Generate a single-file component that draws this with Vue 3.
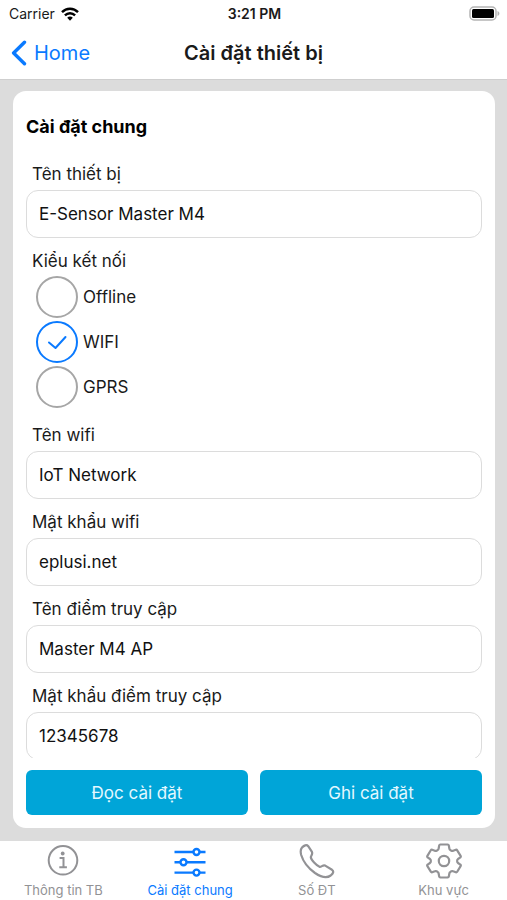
<script setup>
import { ref } from 'vue'

const deviceName = ref('E-Sensor Master M4')
const connection = ref('wifi')
const connections = [
  { value: 'offline', label: 'Offline' },
  { value: 'wifi', label: 'WIFI' },
  { value: 'gprs', label: 'GPRS' },
]
const networkFields = ref([
  { id: 'wifi-name', label: 'Tên wifi', value: 'IoT Network' },
  { id: 'wifi-password', label: 'Mật khẩu wifi', value: 'eplusi.net' },
  { id: 'ap-name', label: 'Tên điểm truy cập', value: 'Master M4 AP' },
  { id: 'ap-password', label: 'Mật khẩu điểm truy cập', value: '12345678' },
])
</script>

<template>
  <div class="screen">
    <header class="top">
      <div class="status">
        <div class="carrier">
          <span>Carrier</span>
          <svg width="18" height="14" viewBox="0 0 18 14" fill="none" stroke="#000" stroke-width="2.4">
            <path d="M1 5.2C5.4.6 12.600.6 17 5.200" />
            <path d="M3.900 8.400c2.900-2.900 7.300-2.900 10.200 0" />
            <path d="M6.200 10.700c1.600-1.500 4-1.500 5.600 0L9 13.700z" fill="#000" stroke="none" />
          </svg>
        </div>
        <span class="time">3:21 PM</span>
        <svg class="battery" width="31" height="15" viewBox="0 0 31 15">
          <rect x="1" y="1" width="26" height="13" rx="4" fill="#fff" stroke="#b4b4b4" stroke-width="1.500" />
          <rect x="3" y="3" width="22" height="9" rx="1.500" fill="#000" />
          <path d="M28.500 5v5c1.200-.4 1.900-1.300 1.900-2.500S29.700 5.400 28.500 5z" fill="#b4b4b4" />
        </svg>
      </div>
      <nav class="bar">
        <a class="back" href="#home">
          <svg width="16" height="26" viewBox="0 0 16 26" fill="none" stroke="#0a7aff" stroke-width="3.400" stroke-linecap="round" stroke-linejoin="round">
            <path d="M13.500 2.200 2.600 13l10.900 10.800" />
          </svg>
          <span>Home</span>
        </a>
        <h1>Cài đặt thiết bị</h1>
      </nav>
    </header>

    <main class="content">
      <form class="card" @submit.prevent>
        <div class="fields">
          <h2>Cài đặt chung</h2>
          <div class="field">
            <label for="device-name">Tên thiết bị</label>
            <input id="device-name" v-model="deviceName" type="text" />
          </div>
          <fieldset class="choices">
            <legend>Kiểu kết nối</legend>
            <div class="options">
              <label v-for="item in connections" :key="item.value" class="option">
                <input v-model="connection" type="radio" name="connection" :value="item.value" />
                <span class="circle">
                  <svg v-if="connection === item.value" width="20" height="16" viewBox="0 0 20 16" fill="none" stroke="currentColor" stroke-width="2" stroke-linecap="round" stroke-linejoin="round">
                    <path d="M2 8.500 8.500 14 18.500 3" />
                  </svg>
                </span>
                <span>{{ item.label }}</span>
              </label>
            </div>
          </fieldset>
          <div v-for="field in networkFields" :key="field.id" class="field">
            <label :for="field.id">{{ field.label }}</label>
            <input :id="field.id" v-model="field.value" type="text" />
          </div>
        </div>
        <div class="actions">
          <button type="button">Đọc cài đặt</button>
          <button type="submit">Ghi cài đặt</button>
        </div>
      </form>
    </main>

    <nav class="tabs">
      <a href="#info">
        <svg width="36" height="36" viewBox="0 0 36 36" fill="none" stroke="currentColor" stroke-width="2">
          <circle cx="18" cy="17.300" r="14.300" />
          <circle cx="17.700" cy="10.500" r="1.900" fill="currentColor" stroke="none" />
          <path d="M14.600 15h3.900v9M14.300 24.300h7.600" />
        </svg>
        <span>Thông tin TB</span>
      </a>
      <a href="#general" class="active" aria-current="page">
        <svg width="36" height="36" viewBox="0 0 36 36" fill="none" stroke="currentColor" stroke-width="2.400">
          <path d="M2.500 9h18.500M28 9h5.500M2.500 19.300h5.500M15 19.300h18.500M2.500 29.600h18.500M28 29.600h5.500" />
          <circle cx="24.500" cy="9" r="3" />
          <circle cx="11.500" cy="19.300" r="3" />
          <circle cx="24.500" cy="29.600" r="3" />
        </svg>
        <span>Cài đặt chung</span>
      </a>
      <a href="#phone">
        <svg width="36" height="36" viewBox="0 0 36 36" fill="none" stroke="currentColor" stroke-width="2.200" stroke-linejoin="round">
          <path d="M3 4.500C5 2.500 7.500 1.200 9.200 3.200L12.800 8.600C14.200 11 12 12.400 11.800 14.200C12 17 17.500 22.500 20.500 23.800C22.500 24.200 23.800 21.600 26.200 22.600L33 26.800C35.300 28.500 34 30.500 31.700 32.500C27.500 35.600 22 34 16 30C9 25 4 18 2.200 12C1.400 9 1.500 6.300 3 4.500z" />
        </svg>
        <span>Số ĐT</span>
      </a>
      <a href="#area">
        <svg width="36" height="36" viewBox="0 0 36 36" fill="none" stroke="currentColor" stroke-width="2.200" stroke-linejoin="round">
          <path d="M14.300 1.500h7.400q.9 0 1.100.9l.6 3.300q.2 1 1 1.400l1 .6q.9.500 1.800.1l2.600-1q.9-.3 1.400.5l3.400 5.600q.5.800-.2 1.500L32 16q-.8.700-.8 1.500v1q0 .8.800 1.500l2.400 1.600q.7.700.2 1.500l-3.400 5.600q-.5.800-1.400.5l-2.600-1q-.9-.4-1.800.1l-1 .6q-.8.400-1 1.400l-.6 3.300q-.2.900-1.100.9h-7.400q-.9 0-1.100-.9l-.6-3.300q-.2-1-1-1.400l-1-.6q-.9-.5-1.800-.1l-2.600 1q-.9.300-1.400-.5l-3.400-5.600q-.5-.8.200-1.500L4 20q.8-.7.800-1.500v-1q0-.8-.8-1.500l-2.400-1.600q-.7-.7-.2-1.500l3.400-5.600q.5-.8 1.400-.5l2.600 1q.9.400 1.800-.1l1-.6q.8-.4 1-1.400l.6-3.300q.2-.9 1.100-.9z" />
          <circle cx="18" cy="18" r="5.200" />
        </svg>
        <span>Khu vực</span>
      </a>
    </nav>
  </div>
</template>

<style>
body {
  margin: 0;
  background: #fff;
}
</style>

<style scoped>
* {
  box-sizing: border-box;
}

.screen {
  display: flex;
  flex-direction: column;
  height: 100vh;
  font-family: Inter, "Noto Sans", sans-serif;
  font-size: 17px;
  line-height: 24px;
  color: #1a1a1a;
}

.top {
  background: #fff;
  border-bottom: 1px solid #cfcfcf;
}

.status {
  display: grid;
  grid-template-columns: 1fr auto 1fr;
  align-items: center;
  height: 27px;
  padding: 0 7px 0 9px;
  font-size: 14px;
}

.carrier {
  display: flex;
  align-items: center;
  gap: 6px;
}

.time {
  font-weight: 600;
}

.battery {
  justify-self: end;
}

.bar {
  display: grid;
  grid-template-columns: 1fr auto 1fr;
  align-items: center;
  height: 52px;
  padding: 0 11px;
  font-size: 20px;
}

.back {
  display: flex;
  align-items: center;
  gap: 7px;
  color: #0a7aff;
  text-decoration: none;
}

h1,
h2 {
  margin: 0;
}

h1 {
  font-size: 20px;
  font-weight: 600;
}

.content {
  flex: 1;
  min-height: 0;
  display: flex;
  padding: 11px 12px 13px 13px;
  background: #dcdcdc;
}

.card {
  flex: 1;
  min-width: 0;
  display: flex;
  flex-direction: column;
  border-radius: 13px;
  background: #fff;
}

.fields {
  flex: 1;
  min-height: 0;
  overflow-y: auto;
  scrollbar-width: none;
  display: flex;
  flex-direction: column;
  gap: 11px;
  padding: 24px 13px 0;
}

h2 {
  margin-bottom: 12px;
  font-size: 18px;
  font-weight: 700;
  color: #000;
}

.field {
  display: flex;
  flex-direction: column;
  gap: 4px;
}

.field label,
legend {
  padding: 0 6px;
}

.field input {
  width: 100%;
  height: 48px;
  padding: 0 12px;
  border: 1px solid #dcdcdc;
  border-radius: 12px;
  background: #fff;
  font: inherit;
  color: #111;
}

.choices {
  margin: 0;
  padding: 0;
  border: 0;
}

.options {
  display: flex;
  flex-direction: column;
  align-items: flex-start;
  gap: 3px;
  padding: 3px 10px 4px;
}

.option {
  display: flex;
  align-items: center;
  gap: 5px;
}

.option input {
  position: absolute;
  opacity: 0;
}

.circle {
  display: flex;
  align-items: center;
  justify-content: center;
  width: 42px;
  height: 42px;
  border: 2px solid #a6a6a6;
  border-radius: 50%;
}

.option input:checked + .circle {
  border-color: #0a7aff;
  color: #0a7aff;
}

.actions {
  display: grid;
  grid-template-columns: 1fr 1fr;
  gap: 12px;
  padding: 12px 13px 13px;
}

button {
  height: 45px;
  border: 0;
  border-radius: 6px;
  background: #00a5d8;
  font: inherit;
  color: #e3f8ff;
}

.tabs {
  display: grid;
  grid-template-columns: repeat(4, 1fr);
  height: 59px;
  background: #fff;
}

.tabs a {
  display: flex;
  flex-direction: column;
  align-items: center;
  padding-top: 2px;
  font-size: 13px;
  line-height: 22px;
  color: #929295;
  text-decoration: none;
}

.tabs .active {
  color: #0a7aff;
}
</style>
